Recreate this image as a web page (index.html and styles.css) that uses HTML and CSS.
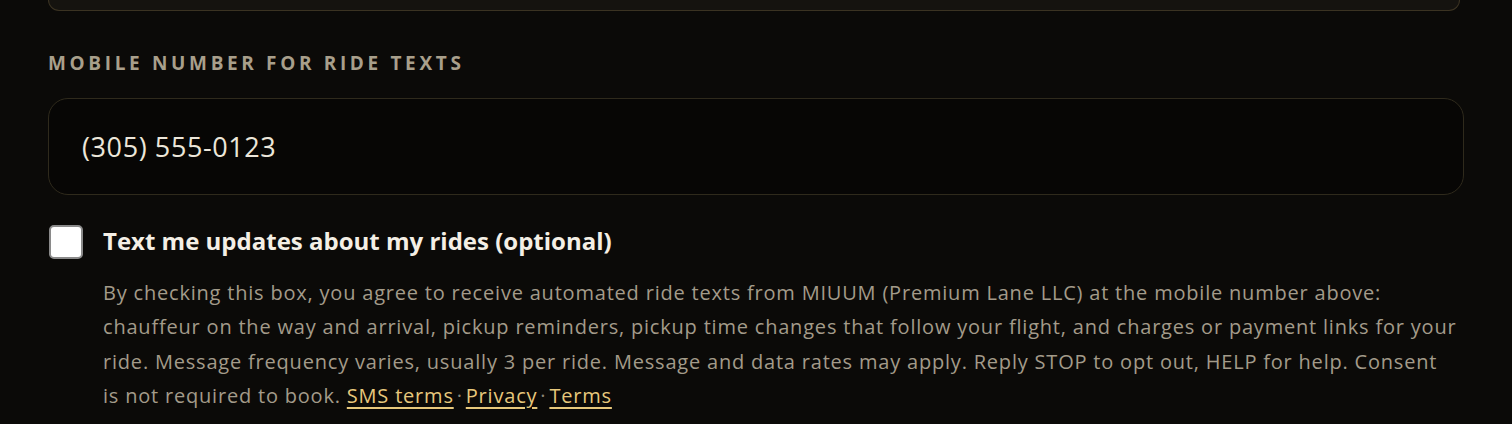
FILE: index.html
```html
<!DOCTYPE html>
<html lang="en">
<head>
<meta charset="utf-8">
<title>Ride texts</title>
<link rel="stylesheet" href="styles.css">
</head>
<body>
<div class="page">
  <div class="prev-field"></div>
  <label class="field-label" for="phone">Mobile number for ride texts</label>
  <div class="input-box" id="phone">(305) 555-0123</div>
  <div class="consent">
    <span class="checkbox"></span>
    <div class="consent-body">
      <div class="consent-title">Text me updates about my rides (optional)</div>
      <p class="consent-text">By checking this box, you agree to receive automated ride texts from MIUUM (Premium Lane LLC) at the mobile number above: chauffeur on the way and arrival, pickup reminders, pickup time changes that follow your flight, and charges or payment links for your ride. Message frequency varies, usually 3 per ride. Message and data rates may apply. Reply STOP to opt out, HELP for help. Consent is not required to book. <a class="link" href="#">SMS terms</a><span class="sep">·</span><a class="link" href="#">Privacy</a><span class="sep">·</span><a class="link" href="#">Terms</a></p>
    </div>
  </div>
</div>
</body>
</html>
```
FILE: styles.css
```css
html, body {
  margin: 0;
  padding: 0;
  background: #0b0a08;
}
body {
  font-family: "Open Sans", "Lato", sans-serif;
  color: #a39b8a;
}
.page {
  padding: 0 48px 0 48px;
  display: flex;
  flex-direction: column;
}
.prev-field {
  height: 10px;
  background: #15130f;
  border: 1px solid #3b3322;
  border-top: none;
  border-radius: 0 0 20px 20px;
  margin-right: 4px;
}
.field-label {
  margin-top: 40px;
  font-size: 19px;
  font-weight: 700;
  letter-spacing: 3.65px;
  text-transform: uppercase;
  color: #a89f8b;
  line-height: 24px;
}
.input-box {
  margin-top: 23px;
  box-sizing: border-box;
  height: 97px;
  border: 1.5px solid #2f2a1c;
  border-radius: 20px;
  background: #070605;
  display: flex;
  align-items: center;
  padding-left: 33px;
  font-size: 27px;
  letter-spacing: 0.6px;
  color: #ece6da;
}
.consent {
  margin-top: 29px;
  display: flex;
  gap: 20px;
  align-items: flex-start;
}
.checkbox {
  flex: none;
  width: 34px;
  height: 34px;
  box-sizing: border-box;
  margin-left: 1px;
  margin-top: 1px;
  background: #ffffff;
  border: 2px solid #8a8a8a;
  border-radius: 5px;
}
.consent-body {
  flex: 1;
  padding-right: 6px;
}
.consent-title {
  font-size: 24px;
  font-weight: 700;
  color: #f4efe5;
  line-height: 34px;
  letter-spacing: 0px;
}
.consent-text {
  margin: 18px 0 0 0;
  font-size: 20px;
  line-height: 34.3px;
  letter-spacing: 0.8px;
  color: #a39b8a;
}
.link {
  color: #e7c87c;
  text-decoration: underline;
  text-underline-offset: 4px;
  text-decoration-thickness: 1.5px;
}
.sep {
  color: #8d8676;
  padding: 0 3px;
}
```
